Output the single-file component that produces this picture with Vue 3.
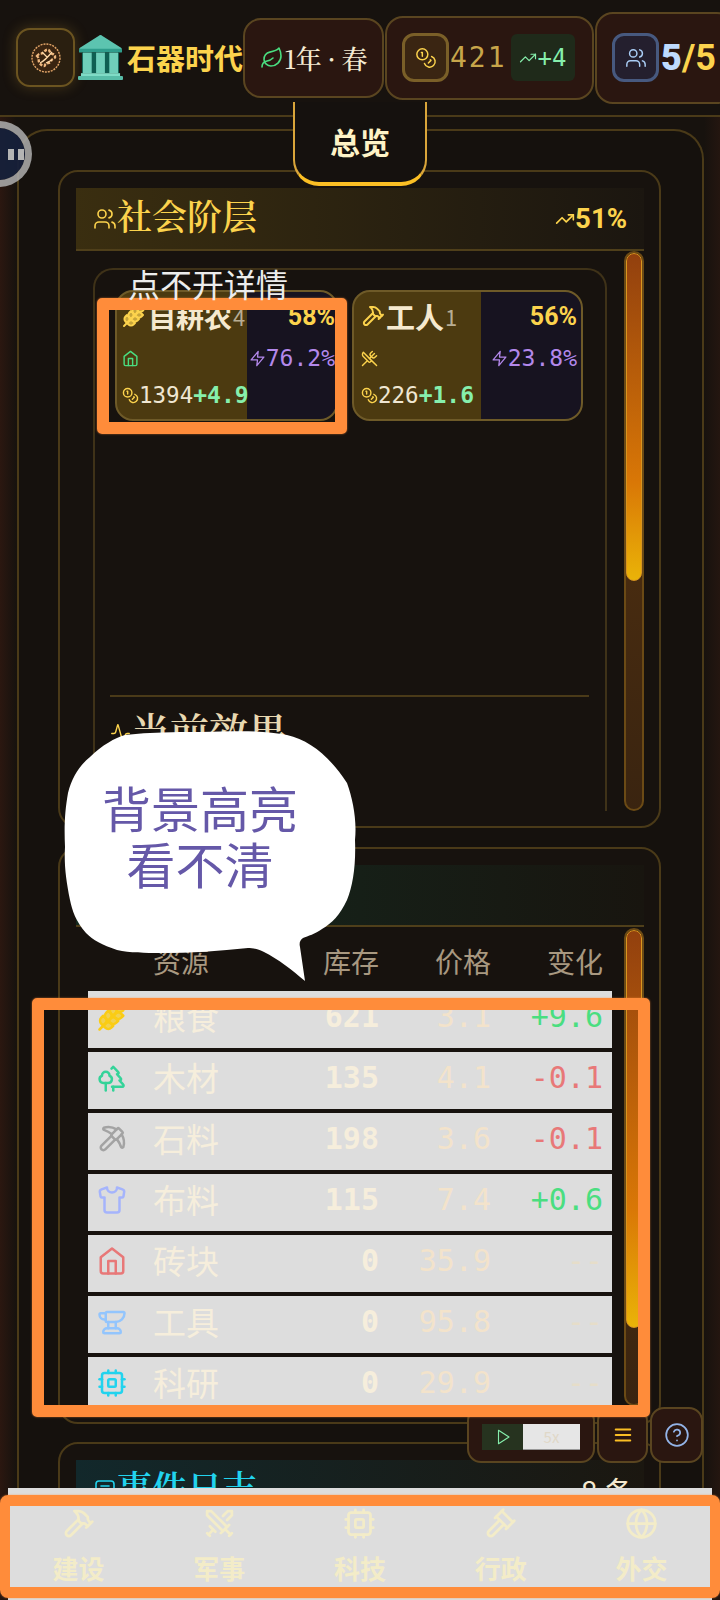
<template>
  <div class="page">
    <header class="topbar">
      <div class="logo-box">
        <svg class="logo-coin" viewBox="0 0 30 30">
          <circle cx="15" cy="15" r="14" fill="#3a2410" stroke="#e0a468" stroke-width="1.4" stroke-dasharray="2 1" />
          <path d="M6 13c3-4 5-1 7-4s5-3 6 0 4 1 5 4-3 2-4 5-5 1-6 4-5-1-6-3 1-3-2-6z" fill="none" stroke="#f0b87e" stroke-width="2.400" stroke-dasharray="3 1.500" />
          <path d="M9 20c4-2 8-6 12-11M11 9l5 5M15 20l6-3" fill="none" stroke="#ffd9a8" stroke-width="1.300" />
        </svg>
      </div>
      <svg class="temple" viewBox="0 0 46 46">
        <path d="M21 1a3 3 0 0 1 4 0L44 13a1 1 0 0 1-1 2H3a1 1 0 0 1-1-2z" fill="#5cc4b0" />
        <rect x="1" y="14" width="44" height="4" rx="1" fill="#2f9d8c" />
        <rect x="4" y="18" width="38" height="21" fill="#0f5f52" />
        <rect x="5" y="18" width="9" height="21" fill="#6fcfba" />
        <rect x="18.500" y="18" width="9" height="21" fill="#6fcfba" />
        <rect x="32" y="18" width="9" height="21" fill="#6fcfba" />
        <rect x="3" y="39" width="40" height="3" fill="#7fdcc6" />
        <rect x="0" y="42" width="46" height="4" rx="1" fill="#58bda8" />
      </svg>
      <span class="era">石器时代</span>

      <div class="chip chip-year">
        <svg class="ic ic-leaf" viewBox="0 0 24 24" v-html="icons.leaf" />
        <span class="year-text">1年 · 春</span>
      </div>

      <div class="chip chip-coin">
        <div class="ic-box ic-box-gold">
          <svg class="ic ic-sm" viewBox="0 0 24 24" v-html="icons.coins" />
        </div>
        <span class="coin-num">421</span>
        <div class="delta">
          <svg class="ic ic-trend" viewBox="0 0 24 24" v-html="icons.trend" />
          <span>+4</span>
        </div>
      </div>

      <div class="chip chip-pop">
        <div class="ic-box ic-box-blue">
          <svg class="ic ic-sm" viewBox="0 0 24 24" v-html="icons.users" />
        </div>
        <span class="pop-num"><b>5</b>/5</span>
      </div>
    </header>

    <div class="tab-wrap">
      <div class="tab">总览</div>
    </div>

    <main class="shell">
      <section class="panel panel-strata">
        <div class="band band-gold">
          <svg class="ic ic-band" viewBox="0 0 24 24" v-html="icons.users" />
          <h2>社会阶层</h2>
          <span class="band-right">
            <svg class="ic ic-bandtrend" viewBox="0 0 24 24" v-html="icons.trend" />51%
          </span>
        </div>
        <div class="panel-body">
          <div class="inner">
            <div class="strata-row">
              <div v-for="s in strata" :key="s.name" class="stratum" :class="s.cls" :style="{ '--split': s.split }">
                <div class="st-line st-top">
                  <svg class="ic ic-st" :class="{ 'ic-filled': s.icon === 'wheat' }" viewBox="0 0 24 24" v-html="icons[s.icon]" />
                  <span class="st-name">{{ s.name }}</span>
                  <span class="st-count">{{ s.count }}</span>
                  <span class="st-pct">{{ s.pct }}</span>
                </div>
                <div class="st-line st-mid">
                  <svg class="ic ic-need" :class="s.needCls" viewBox="0 0 24 24" v-html="icons[s.need]" />
                  <span class="st-power">
                    <svg class="ic ic-zap" viewBox="0 0 24 24" v-html="icons.zap" />{{ s.power }}
                  </span>
                </div>
                <div class="st-line st-low">
                  <svg class="ic ic-coin" viewBox="0 0 24 24" v-html="icons.coins" />
                  <span class="st-money">{{ s.money }}</span>
                  <span class="st-gain">{{ s.gain }}</span>
                </div>
              </div>
            </div>
            <div class="effects">
              <svg class="ic ic-activity" viewBox="0 0 24 24" v-html="icons.activity" />
              <h3>当前效果</h3>
            </div>
          </div>
          <div class="scroll scroll-a"><div class="thumb"></div></div>
        </div>
      </section>

      <section class="panel panel-market">
        <div class="band band-green"></div>
        <div class="panel-body">
          <div class="table">
            <div class="t-head">
              <span></span>
              <span>资源</span>
              <span class="num">库存</span>
              <span class="num">价格</span>
              <span class="num">变化</span>
            </div>
            <div v-for="r in resources" :key="r.name" class="t-row">
              <svg class="ic ic-res" :class="{ 'ic-filled': r.icon === 'wheat' }" :style="{ color: r.color }" viewBox="0 0 24 24" v-html="icons[r.icon]" />
              <span class="r-name">{{ r.name }}</span>
              <span class="num r-stock">{{ r.stock }}</span>
              <span class="num r-price">{{ r.price }}</span>
              <span class="num r-change" :class="r.tone">{{ r.change }}</span>
            </div>
          </div>
          <div class="scroll scroll-b"><div class="thumb"></div></div>
        </div>
      </section>

      <section class="panel panel-log">
        <div class="band band-cyan">
          <svg class="ic ic-band" viewBox="0 0 24 24" v-html="icons.log" />
          <h2>事件日志</h2>
          <span class="band-right log-count">8 条</span>
        </div>
      </section>
    </main>

    <div class="pause">
      <span></span>
      <span></span>
    </div>

    <div class="float-bar">
      <div class="fb fb-speed">
        <div class="play">
          <svg class="ic ic-play" viewBox="0 0 24 24"><polygon points="6 3 20 12 6 21 6 3" /></svg>
        </div>
        <div class="speed">5x</div>
      </div>
      <div class="fb fb-menu">
        <svg class="ic ic-menu" viewBox="0 0 24 24" v-html="icons.menu" />
      </div>
      <div class="fb fb-help">
        <svg class="ic ic-help" viewBox="0 0 24 24" v-html="icons.help" />
      </div>
    </div>

    <nav class="bottom-nav">
      <div v-for="n in nav" :key="n.label" class="nav-item">
        <svg class="ic ic-nav" viewBox="0 0 24 24" v-html="icons[n.icon]" />
        <span>{{ n.label }}</span>
      </div>
    </nav>

    <!-- annotations drawn on top of the screenshot -->
    <div class="mark mark-card"></div>
    <div class="mark mark-table"></div>
    <div class="mark mark-nav"></div>
    <div class="note-text">点不开详情</div>
    <div class="bubble">
      <svg viewBox="0 0 300 262" class="bubble-shape">
        <path d="M140 7C175 6 205 5 227 10 250 15 270 32 287 58 293 75 297 95 295 115 296 140 293 160 287 175 280 190 272 198 262 204 255 209 248 211 243 213 240 215 239 218 240 222L245 256C232 245 218 234 204 227 198 224 192 223 188 223 160 226 130 228 101 228 85 228 70 228 57 225 42 220 33 215 26 208 16 197 12 185 10 175 6 155 4 140 5 122 4 100 5 85 8 68 12 52 20 40 30 32 42 20 55 13 65 10 90 7 115 7 140 7Z" fill="#fff" />
      </svg>
      <div class="bubble-text">背景高亮<br />看不清</div>
    </div>
  </div>
</template>

<script setup>
const icons = {
  users: '<path d="M16 21v-2a4 4 0 0 0-4-4H6a4 4 0 0 0-4 4v2"/><circle cx="9" cy="7" r="4"/><path d="M22 21v-2a4 4 0 0 0-3-3.87"/><path d="M16 3.13a4 4 0 0 1 0 7.75"/>',
  coins: '<circle cx="8" cy="8" r="6"/><path d="M18.09 10.37A6 6 0 1 1 10.34 18"/><path d="M7 6h1v4"/><path d="m16.71 13.88.7.71-2.82 2.82"/>',
  trend: '<polyline points="22 7 13.5 15.5 8.5 10.5 2 17"/><polyline points="16 7 22 7 22 13"/>',
  leaf: '<path d="M11 20A7 7 0 0 1 9.8 6.1C15.5 5 17 4.48 19 2c1 2 2 4.18 2 8 0 5.5-4.78 10-10 10Z"/><path d="M2 21c0-3 1.85-5.36 5.08-6C9.5 14.52 12 13 13 12"/>',
  zap: '<polygon points="13 2 3 14 12 14 11 22 21 10 12 10 13 2"/>',
  home: '<path d="m3 9 9-7 9 7v11a2 2 0 0 1-2 2H5a2 2 0 0 1-2-2z"/><polyline points="9 22 9 12 15 12 15 22"/>',
  hammer: '<path d="m15 12-8.5 8.5c-.83.83-2.17.83-3 0a2.12 2.12 0 0 1 0-3L12 9"/><path d="M17.64 15 22 10.64"/><path d="m20.91 11.7-1.25-1.25c-.6-.6-.93-1.4-.93-2.25v-.86L16.01 4.6a5.56 5.56 0 0 0-3.94-1.64H9l.92.82A6.18 6.18 0 0 1 12 8.4v1.56l2 2h2.47l2.26 1.91"/>',
  swords: '<polyline points="14.5 17.5 3 6 3 3 6 3 17.5 14.5"/><line x1="13" x2="19" y1="19" y2="13"/><line x1="16" x2="20" y1="16" y2="20"/><line x1="19" x2="21" y1="21" y2="19"/><polyline points="14.5 6.5 18 3 21 3 21 6 17.5 9.5"/><line x1="5" x2="9" y1="14" y2="18"/><line x1="7" x2="4" y1="17" y2="20"/><line x1="3" x2="5" y1="19" y2="21"/>',
  cpu: '<rect width="16" height="16" x="4" y="4" rx="2"/><rect width="6" height="6" x="9" y="9" rx="1"/><path d="M15 2v2"/><path d="M15 20v2"/><path d="M2 15h2"/><path d="M2 9h2"/><path d="M20 15h2"/><path d="M20 9h2"/><path d="M9 2v2"/><path d="M9 20v2"/>',
  globe: '<circle cx="12" cy="12" r="10"/><path d="M12 2a14.5 14.5 0 0 0 0 20 14.5 14.5 0 0 0 0-20"/><path d="M2 12h20"/>',
  gavel: '<path d="m14.5 12.5-8 8a2.119 2.119 0 1 1-3-3l8-8"/><path d="m16 16 6-6"/><path d="m8 8 6-6"/><path d="m9 7 8 8"/><path d="m21 11-8-8"/>',
  wheat: '<path d="M2 22 16 8"/><path d="M3.47 12.53 5 11l1.53 1.53a3.5 3.5 0 0 1 0 4.94L5 19l-1.53-1.53a3.5 3.5 0 0 1 0-4.94Z"/><path d="M7.47 8.53 9 7l1.53 1.53a3.5 3.5 0 0 1 0 4.94L9 15l-1.53-1.53a3.5 3.5 0 0 1 0-4.94Z"/><path d="M11.47 4.53 13 3l1.53 1.53a3.5 3.5 0 0 1 0 4.94L13 11l-1.53-1.53a3.5 3.5 0 0 1 0-4.94Z"/><path d="M20 2h2v2a4 4 0 0 1-4 4h-2V6a4 4 0 0 1 4-4Z"/><path d="M11.47 17.47 13 19l-1.53 1.53a3.5 3.5 0 0 1-4.94 0L5 19l1.53-1.53a3.5 3.5 0 0 1 4.94 0Z"/><path d="M15.47 13.47 17 15l-1.53 1.53a3.5 3.5 0 0 1-4.94 0L9 15l1.53-1.53a3.5 3.5 0 0 1 4.94 0Z"/><path d="M19.47 9.47 21 11l-1.53 1.53a3.5 3.5 0 0 1-4.94 0L13 11l1.53-1.53a3.5 3.5 0 0 1 4.94 0Z"/>',
  trees: '<path d="M10 10v.2A3 3 0 0 1 8.900 16H5a3 3 0 0 1-1-5.800V10a3 3 0 0 1 6 0Z"/><path d="M7 16v6"/><path d="M13 19v3"/><path d="M12 19h8.300a1 1 0 0 0 .7-1.700L18 14h.3a1 1 0 0 0 .7-1.700L16 9h.2a1 1 0 0 0 .8-1.700L13 3l-1.400 1.500"/>',
  pickaxe: '<path d="M14.531 12.469 6.619 20.38a1 1 0 1 1-3-3l7.912-7.912"/><path d="M15.686 4.314A12.5 12.5 0 0 0 5.461 2.958 1 1 0 0 0 5.58 4.71a22 22 0 0 1 6.318 3.393"/><path d="M17.7 3.7a1 1 0 0 0-1.4 0l-4.6 4.6a1 1 0 0 0 0 1.4l2.6 2.6a1 1 0 0 0 1.4 0l4.6-4.6a1 1 0 0 0 0-1.4z"/><path d="M19.686 8.314a12.501 12.501 0 0 1 1.356 10.225 1 1 0 0 1-1.751-.119 22 22 0 0 0-3.393-6.319"/>',
  shirt: '<path d="M20.38 3.46 16 2a4 4 0 0 1-8 0L3.62 3.46a2 2 0 0 0-1.34 2.23l.58 3.47a1 1 0 0 0 .99.84H6v10c0 1.1.9 2 2 2h8a2 2 0 0 0 2-2V10h2.150a1 1 0 0 0 .99-.84l.58-3.47a2 2 0 0 0-1.34-2.230z"/>',
  anvil: '<path d="M7 10H6a4 4 0 0 1-4-4 1 1 0 0 1 1-1h4"/><path d="M7 5a1 1 0 0 1 1-1h13a1 1 0 0 1 1 1 7 7 0 0 1-7 7H8a1 1 0 0 1-1-1z"/><path d="M9 12v5"/><path d="M15 12v5"/><path d="M5 20a3 3 0 0 1 3-3h8a3 3 0 0 1 3 3 1 1 0 0 1-1 1H6a1 1 0 0 1-1-1"/>',
  utensils: '<path d="m16 2-2.300 2.300a3 3 0 0 0 0 4.200l1.800 1.800a3 3 0 0 0 4.200 0L22 8"/><path d="M15 15 3.300 3.300a4.200 4.200 0 0 0 0 6l7.300 7.300c.7.7 2 .7 2.800 0L15 15Zm0 0 7 7"/><path d="m2.100 21.800 6.400-6.300"/><path d="m19 5-7 7"/>',
  activity: '<path d="M22 12h-2.480a2 2 0 0 0-1.930 1.460l-2.350 8.360a.25.25 0 0 1-.48 0L9.240 2.180a.25.25 0 0 0-.48 0l-2.350 8.360A2 2 0 0 1 4.490 12H2"/>',
  help: '<circle cx="12" cy="12" r="10"/><path d="M9.090 9a3 3 0 0 1 5.830 1c0 2-3 3-3 3"/><path d="M12 17h.01"/>',
  menu: '<line x1="4" x2="20" y1="6" y2="6"/><line x1="4" x2="20" y1="12" y2="12"/><line x1="4" x2="20" y1="18" y2="18"/>',
  log: '<rect x="3" y="4" width="18" height="16" rx="3"/><path d="M8 9h8"/><path d="M8 14h8"/>',
}

const strata = [
  { name: '自耕农', count: 4, pct: '58%', icon: 'wheat', need: 'home', needCls: 'need-green', power: '76.2%', money: '1394', gain: '+4.9', split: '59.500%', cls: 'st-first' },
  { name: '工人', count: 1, pct: '56%', icon: 'hammer', need: 'utensils', needCls: 'need-gold', power: '23.8%', money: '226', gain: '+1.6', split: '56%', cls: 'st-second' },
]

const resources = [
  { name: '粮食', stock: 621, price: '3.1', change: '+9.6', tone: 'up', icon: 'wheat', color: '#facc15' },
  { name: '木材', stock: 135, price: '4.1', change: '-0.1', tone: 'down', icon: 'trees', color: '#34d399' },
  { name: '石料', stock: 198, price: '3.6', change: '-0.1', tone: 'down', icon: 'pickaxe', color: '#a3a3a3' },
  { name: '布料', stock: 115, price: '7.4', change: '+0.6', tone: 'up', icon: 'shirt', color: '#a5b4fc' },
  { name: '砖块', stock: 0, price: '35.9', change: '--', tone: 'none', icon: 'home', color: '#e87878' },
  { name: '工具', stock: 0, price: '95.8', change: '--', tone: 'none', icon: 'anvil', color: '#93c5fd' },
  { name: '科研', stock: 0, price: '29.9', change: '--', tone: 'none', icon: 'cpu', color: '#22d3ee' },
]

const nav = [
  { label: '建设', icon: 'hammer' },
  { label: '军事', icon: 'swords' },
  { label: '科技', icon: 'cpu' },
  { label: '行政', icon: 'gavel' },
  { label: '外交', icon: 'globe' },
]
</script>

<style>
html,
body {
  margin: 0;
  background: #15110e;
}
</style>

<style scoped>
.page {
  --serif: "Noto Serif CJK SC", "Liberation Serif", "Noto Sans CJK SC", serif;
  --sans: "Noto Sans CJK SC", sans-serif;
  --mono: "DejaVu Sans Mono", "Noto Sans CJK SC", monospace;
  position: relative;
  width: 720px;
  height: 1600px;
  overflow: hidden;
  font-family: var(--sans);
  color: #f5e9cf;
  background: linear-gradient(90deg, #2b1710 0, #17120e 16px, #17120e 704px, #241610 720px);
}

.ic {
  flex: none;
  fill: none;
  stroke: currentColor;
  stroke-width: 2;
  stroke-linecap: round;
  stroke-linejoin: round;
}

.ic-filled {
  fill: currentColor;
  fill-opacity: 0.7;
}

/* top bar */
.topbar {
  display: flex;
  align-items: center;
  height: 117px;
  padding-left: 16px;
  border-bottom: 2px solid #4a3a18;
  box-sizing: border-box;
  background: #17120e;
}

.logo-box {
  display: flex;
  align-items: center;
  justify-content: center;
  width: 59px;
  height: 59px;
  border: 2px solid #6b5420;
  border-radius: 14px;
  background: #2a1f10;
  box-shadow: 0 0 14px rgba(180, 140, 50, 0.3);
  flex: none;
  box-sizing: border-box;
}

.logo-coin {
  width: 30px;
  height: 30px;
}

.temple {
  flex: none;
  width: 45px;
  height: 45px;
  margin-left: 3px;
}

.era {
  flex: none;
  width: 115px;
  margin-left: 4px;
  font-size: 29px;
  font-weight: 700;
  line-height: 1;
  white-space: nowrap;
  color: #fcd34d;
}

.chip {
  display: flex;
  align-items: center;
  flex: none;
  box-sizing: border-box;
  border: 2px solid #5a4520;
  border-radius: 18px;
  background: #2a1610;
}

.chip-year {
  width: 141px;
  height: 80px;
  margin-left: 1px;
  padding-left: 15px;
}

.ic-leaf {
  width: 24px;
  height: 24px;
  color: #4ade80;
  stroke-width: 1.600;
}

.year-text {
  font-family: var(--serif);
  font-size: 26px;
  font-weight: 500;
  letter-spacing: -0.5px;
  color: #f5ead2;
  white-space: nowrap;
}

.chip-coin {
  width: 209px;
  height: 84px;
  margin-left: 1px;
  padding-left: 15px;
}

.ic-box {
  display: flex;
  align-items: center;
  justify-content: center;
  flex: none;
  box-sizing: border-box;
  width: 47px;
  height: 49px;
  border-radius: 12px;
}

.ic-box-gold {
  border: 3px solid #7a5f28;
  background: #3a2512;
  color: #fcd34d;
}

.ic-box-blue {
  border: 3px solid #47597f;
  background: #241f2e;
  color: #a9cdf5;
}

.ic-sm {
  width: 22px;
  height: 22px;
  stroke-width: 1.600;
}

.coin-num {
  margin-left: 1px;
  font-family: var(--mono);
  font-size: 28px;
  letter-spacing: 2px;
  color: #c7a54a;
}

.delta {
  display: flex;
  align-items: center;
  width: 64px;
  height: 47px;
  margin-left: 4px;
  padding-left: 8px;
  box-sizing: border-box;
  border-radius: 6px;
  background: #1f2a1a;
  font-family: var(--mono);
  font-size: 24px;
  color: #86efac;
}

.ic-trend {
  width: 18px;
  height: 18px;
  margin-right: 1px;
  stroke-width: 1.600;
}

.chip-pop {
  width: 140px;
  height: 92px;
  margin-left: 1px;
  padding-left: 15px;
}

.pop-num {
  margin-left: 2px;
  font-family: Roboto, sans-serif;
  font-size: 36px;
  font-weight: 700;
  color: #fcd34d;
}

.pop-num b {
  color: #bfdbfe;
}

/* tab */
.tab-wrap {
  position: relative;
  z-index: 2;
  display: flex;
  justify-content: center;
  height: 0;
}

.tab {
  box-sizing: border-box;
  width: 134px;
  height: 84px;
  margin-top: -15px;
  padding-top: 17px;
  border: 2px solid #d9a53a;
  border-top: 0;
  border-bottom: 4px solid #fbbf24;
  border-radius: 0 0 26px 26px;
  background: #15110e;
  text-align: center;
  font-size: 30px;
  font-weight: 700;
  line-height: 44px;
  color: #fef3c7;
}

/* main shell and panels */
.shell {
  display: flex;
  flex-direction: column;
  gap: 18px;
  box-sizing: border-box;
  width: 687px;
  height: 1500px;
  margin: 12px 0 0 17px;
  padding: 39px 41px 0 39px;
  border: 2px solid #4a3a18;
  border-bottom: 0;
  border-radius: 30px 30px 0 0;
  background: #15110d;
}

.panel {
  flex: none;
  box-sizing: border-box;
  padding: 16px 15px 16px 16px;
  border: 2px solid #4a3a18;
  border-radius: 20px;
  background: #17120e;
}

.panel-strata {
  height: 658px;
}

.panel-market {
  height: 577px;
  margin-top: 1px;
}

.panel-log {
  height: 300px;
}

.band {
  display: flex;
  align-items: center;
  box-sizing: border-box;
  height: 63px;
  padding: 0 17px;
  border-bottom: 2px solid #4f3f1a;
}

.band h2 {
  margin: -6px 0 0;
  font-family: var(--serif);
  font-size: 35px;
  font-weight: 600;
  line-height: 1;
  white-space: nowrap;
}

.band-gold {
  background: linear-gradient(90deg, #3a2e10, #1b1610);
}

.band-gold h2 {
  color: #fcd34d;
}

.band-green {
  height: 62px;
  background: linear-gradient(90deg, #14291f, #18150f);
}

.band-cyan {
  align-items: flex-start;
  padding-top: 5px;
  background: linear-gradient(90deg, #12282b, #1b1710);
}

.band-cyan h2 {
  margin-top: 4px;
  color: #22d3ee;
}

.ic-band {
  width: 24px;
  height: 24px;
  margin-right: 0;
  color: #fcd34d;
  stroke-width: 1.600;
}

.band-cyan .ic-band {
  margin-top: 12px;
  color: #22d3ee;
}

.band-right {
  display: flex;
  align-items: center;
  margin-left: auto;
  font-family: Roboto, sans-serif;
  font-size: 27.500px;
  font-weight: 700;
  color: #fcd34d;
}

.ic-bandtrend {
  width: 20px;
  height: 20px;
}

.log-count {
  margin-top: 3px;
  margin-right: -7px;
  font-family: var(--sans);
  font-size: 30px;
  font-weight: 400;
  color: #f5e9cf;
}

.panel-body {
  display: flex;
  align-items: stretch;
}

.panel-strata .panel-body {
  height: 560px;
}

.panel-market .panel-body {
  height: 478px;
  margin-top: 1px;
}

.scroll {
  flex: none;
  box-sizing: border-box;
  width: 20px;
  margin-left: auto;
  border: 2px solid #6b4a15;
  border-radius: 10px;
  background: linear-gradient(180deg, #5a3510, #3a2410);
  overflow: hidden;
}

.thumb {
  box-sizing: border-box;
  width: 100%;
  border: 1px solid #d9951f;
  border-radius: 8px;
  background: linear-gradient(180deg, #92400e, #d97706 70%, #eab308);
}

.scroll-a .thumb {
  height: 59%;
}

.scroll-b .thumb {
  height: 84%;
}

.inner {
  position: relative;
  flex: none;
  box-sizing: border-box;
  width: 514px;
  margin: 17px 0 0 17px;
  padding: 20px 20px 0;
  border: 2px solid #3f3218;
  border-bottom: 0;
  border-radius: 20px 20px 0 0;
}

/* stratum cards */
.strata-row {
  display: flex;
  gap: 14px;
  height: 405px;
}

.stratum {
  box-sizing: border-box;
  height: 131px;
  padding: 7px 4px 0 7px;
  border: 2px solid #6e5a28;
  border-radius: 18px;
  background: linear-gradient(90deg, #4c3a10 var(--split), #171320 var(--split));
}

.st-first {
  width: 223px;
  padding-left: 5px;
  padding-right: 1px;
}

.st-second {
  width: 231px;
}

.st-line {
  display: flex;
  align-items: center;
}

.st-top {
  height: 34px;
}

.st-mid {
  height: 38px;
  margin-top: 6px;
}

.st-low {
  height: 38px;
  margin-top: -1px;
}

.ic-st {
  width: 24px;
  height: 24px;
  margin-right: 2px;
  color: #fcd34d;
}

.st-name {
  font-size: 28px;
  font-weight: 700;
  line-height: 1;
  white-space: nowrap;
  color: #f5e9cf;
}

.st-second .st-name {
  font-size: 29px;
}

.st-second .ic-st {
  margin-right: 1px;
}

.st-count {
  margin-left: 1px;
  font-size: 22px;
  color: #b8ad94;
}

.st-pct {
  margin-left: auto;
  font-family: Roboto, sans-serif;
  font-size: 25px;
  font-weight: 700;
  color: #fcd34d;
}

.ic-need {
  width: 17px;
  height: 17px;
}

.need-green {
  color: #4ade80;
}

.need-gold {
  color: #fcd34d;
}

.st-power {
  display: flex;
  align-items: center;
  margin-left: auto;
  font-family: var(--mono);
  font-size: 23px;
  color: #b388eb;
}

.ic-zap {
  width: 17px;
  height: 17px;
  stroke-width: 1.800;
}

.ic-coin {
  width: 17px;
  height: 17px;
  color: #fcd34d;
}

.st-money {
  font-family: var(--mono);
  font-size: 22.500px;
  color: #efe6d2;
}

.st-gain {
  font-family: var(--mono);
  font-size: 23px;
  font-weight: 700;
  color: #86efac;
}

.effects {
  display: flex;
  align-items: flex-start;
  box-sizing: border-box;
  height: 100px;
  margin: 0 -4px 0 -5px;
  padding-top: 10px;
  border-top: 2px solid #4a3a18;
}

.ic-activity {
  width: 21px;
  height: 21px;
  margin-top: 16px;
  color: #fcd34d;
  stroke-width: 1.600;
}

.effects h3 {
  margin: 0;
  font-family: var(--serif);
  font-size: 39px;
  font-weight: 600;
  line-height: 44px;
  color: #e8d8b0;
}

/* resource table */
.table {
  flex: none;
  width: 524px;
  margin-left: 12px;
}

.t-head,
.t-row {
  display: grid;
  align-items: center;
  padding-right: 9px;
}

.t-head {
  grid-template-columns: 65px 114px 112px 112px 112px;
  height: 63px;
  padding-top: 3px;
  box-sizing: border-box;
  font-size: 28px;
  color: #a89880;
}

.num {
  text-align: right;
}

.t-row {
  height: 57px;
  margin-bottom: 4px;
  padding-left: 9px;
  grid-template-columns: 56px 114px 112px 112px 112px;
  background: #ddd;
}

.ic-res {
  width: 30px;
  height: 30px;
  margin-top: -6px;
}

.r-name {
  margin-top: -6px;
  font-size: 33px;
  line-height: 1.2;
  white-space: nowrap;
  color: #f6eedc;
}

.r-stock,
.r-price,
.r-change {
  margin-top: -6px;
  font-family: var(--mono);
  font-size: 30px;
  line-height: 1.2;
}

.r-stock {
  font-weight: 700;
  color: #f6eedc;
}

.r-price {
  color: #f3e3cb;
}

.up {
  color: #4ade80;
}

.down {
  color: #e87878;
}

.none {
  color: #e6ddc9;
}

/* floating controls */
.pause {
  position: absolute;
  left: -34px;
  top: 121px;
  display: flex;
  align-items: center;
  justify-content: flex-end;
  gap: 4px;
  box-sizing: border-box;
  width: 66px;
  height: 66px;
  padding-right: 1px;
  border: 7px solid rgba(175, 175, 175, 0.85);
  border-radius: 50%;
  background: rgba(22, 32, 58, 0.95);
  background-clip: padding-box;
}

.pause span {
  width: 6px;
  height: 11px;
  background: #b4b4b4;
}

.float-bar {
  position: absolute;
  left: 467px;
  top: 1407px;
  z-index: 3;
  display: flex;
  gap: 2px;
}

.fb {
  display: flex;
  align-items: center;
  justify-content: center;
  box-sizing: border-box;
  height: 56px;
  border: 2px solid #5a4520;
  border-radius: 14px;
  background: #2a1610;
}

.fb-speed {
  width: 128px;
  padding-top: 3px;
}

.fb-menu {
  width: 51px;
}

.fb-help {
  width: 53px;
}

.play {
  display: flex;
  align-items: center;
  justify-content: center;
  width: 41px;
  height: 26px;
  background: #26331f;
  color: #86efac;
}

.ic-play {
  width: 18px;
  height: 18px;
  stroke-width: 1.500;
}

.speed {
  width: 57px;
  height: 26px;
  background: #e6e6e6;
  border-bottom: 1px solid #999;
  box-sizing: border-box;
  font-size: 15px;
  line-height: 25px;
  text-align: center;
  color: #e0d8c8;
}

.ic-menu {
  width: 22px;
  height: 22px;
  color: #fbbf24;
}

.ic-help {
  width: 26px;
  height: 26px;
  color: #93b4e8;
  stroke-width: 1.600;
}

/* bottom nav */
.bottom-nav {
  position: absolute;
  left: 8px;
  right: 8px;
  top: 1488px;
  bottom: 0;
  z-index: 4;
  display: grid;
  grid-template-columns: repeat(5, 1fr);
  padding-top: 19px;
  box-sizing: border-box;
  background: #ddd;
}

.nav-item {
  display: flex;
  flex-direction: column;
  align-items: center;
  font-size: 26px;
  font-weight: 700;
  line-height: 36px;
  color: #f3ecc8;
}

.ic-nav {
  width: 33px;
  height: 33px;
  margin-bottom: 10px;
}

/* annotations */
.mark {
  position: absolute;
  z-index: 5;
  box-sizing: border-box;
  border: 12px solid #ff8c3a;
  border-radius: 5px;
  box-shadow: 0 0 2px rgba(255, 140, 58, 0.7);
}

.mark-card {
  left: 97px;
  top: 298px;
  width: 250px;
  height: 136px;
}

.mark-table {
  left: 32px;
  top: 998px;
  width: 618px;
  height: 419px;
}

.mark-nav {
  left: 0;
  top: 1495px;
  width: 720px;
  height: 103px;
  border-width: 11px 10px;
  border-radius: 8px;
}

.note-text {
  position: absolute;
  left: 128px;
  top: 261px;
  z-index: 6;
  font-size: 32px;
  line-height: 44px;
  color: #ececec;
}

.bubble {
  position: absolute;
  left: 60px;
  top: 725px;
  z-index: 6;
  width: 300px;
  height: 262px;
}

.bubble-shape {
  display: block;
  width: 300px;
  height: 262px;
}

.bubble-text {
  position: absolute;
  left: 0;
  top: 54px;
  width: 280px;
  font-size: 49px;
  line-height: 56px;
  text-align: center;
  color: #6558a8;
}
</style>
